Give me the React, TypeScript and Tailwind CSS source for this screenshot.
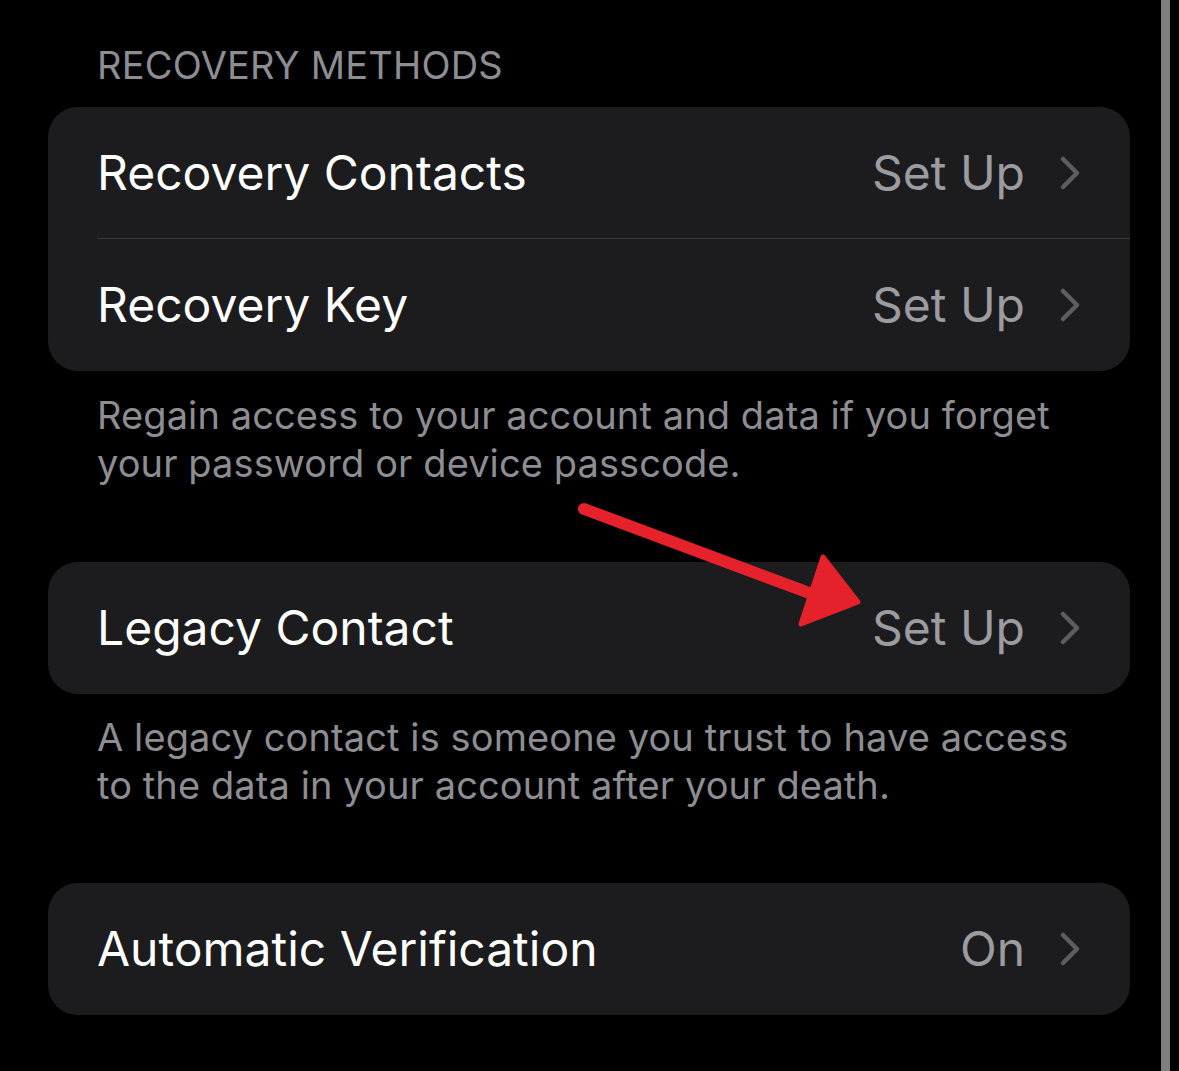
import React from 'react'

const font = { fontFamily: 'Inter, "Noto Sans", sans-serif' }

function Chevron() {
  return (
    <svg width="22" height="36" viewBox="0 0 22 36" className="shrink-0">
      <path
        d="M4 4 L18 18 L4 32"
        fill="none"
        stroke="#5c5c61"
        strokeWidth="4.5"
        strokeLinecap="round"
        strokeLinejoin="round"
      />
    </svg>
  )
}

function Row({ title, value, divider }: { title: string; value: string; divider?: boolean }) {
  return (
    <div className="relative flex h-[132px] items-center pl-[49px] pr-[49px]">
      <span className="flex-1 text-[48px] text-white">{title}</span>
      <span className="text-[48px] text-[#9b9ba0]">{value}</span>
      <span className="ml-[34px]">
        <Chevron />
      </span>
      {divider && <div className="absolute bottom-0 left-[49px] right-0 h-px bg-[#38383a]" />}
    </div>
  )
}

function Footer({ children }: { children: React.ReactNode }) {
  return (
    <p className="w-[1040px] pl-[49px] text-[38px] leading-[48px] tracking-[0.1px] text-[#8d8d92]">
      {children}
    </p>
  )
}

export default function App() {
  return (
    <div className="relative flex h-[1071px] w-[1179px] overflow-hidden bg-black" style={font}>
      <div className="flex w-[1161px] flex-col pl-[48px] pr-[31px]">
        <div className="pl-[49px] pt-[41px] text-[38px] leading-[48px] tracking-[0.2px] text-[#8d8d92]">
          RECOVERY METHODS
        </div>
        <div className="mt-[18px] overflow-hidden rounded-[30px] bg-[#1c1c1e]">
          <Row title="Recovery Contacts" value="Set Up" divider />
          <Row title="Recovery Key" value="Set Up" />
        </div>
        <div className="mt-[20px]">
          <Footer>
            Regain access to your account and data if you forget your password or device passcode.
          </Footer>
        </div>
        <div className="mt-[75px] overflow-hidden rounded-[30px] bg-[#1c1c1e]">
          <Row title="Legacy Contact" value="Set Up" />
        </div>
        <div className="mt-[19px]">
          <Footer>
            A legacy contact is someone you trust to have access to the data in your account after
            your death.
          </Footer>
        </div>
        <div className="mt-[74px] overflow-hidden rounded-[30px] bg-[#1c1c1e]">
          <Row title="Automatic Verification" value="On" />
        </div>
      </div>
      <div className="w-[9px] bg-[#7f7f7f]" />
      <div className="flex-1 bg-black" />

      <svg
        className="pointer-events-none absolute left-0 top-0"
        width="1179"
        height="1071"
        viewBox="0 0 1179 1071"
      >
        <line
          x1="584"
          y1="509"
          x2="812"
          y2="594"
          stroke="#e5222b"
          strokeWidth="12"
          strokeLinecap="round"
        />
        <path
          d="M823 557 L858 602 L801 624 Z"
          fill="#e5222b"
          stroke="#e5222b"
          strokeWidth="5"
          strokeLinejoin="round"
        />
      </svg>
    </div>
  )
}
